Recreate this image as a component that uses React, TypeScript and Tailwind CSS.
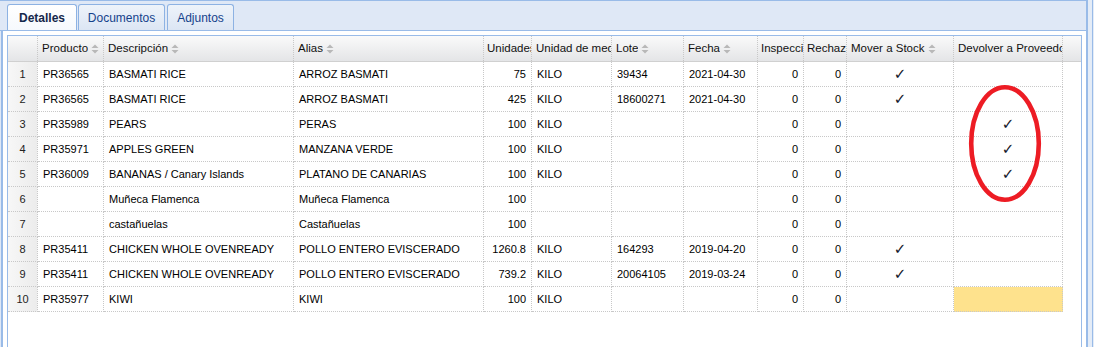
import React from "react";

type Col = {
  key: string;
  label: string;
  w: string;
  align: "left" | "right" | "center";
  sort?: boolean;
};

const cols: Col[] = [
  { key: "prod", label: "Producto", w: "w-[66px]", align: "left", sort: true },
  { key: "desc", label: "Descripción", w: "w-[190px]", align: "left", sort: true },
  { key: "alias", label: "Alias", w: "w-[190px]", align: "left", sort: true },
  { key: "uds", label: "Unidades", w: "w-[48px]", align: "right" },
  { key: "um", label: "Unidad de medida", w: "w-[80px]", align: "left" },
  { key: "lote", label: "Lote", w: "w-[72px]", align: "left", sort: true },
  { key: "fecha", label: "Fecha", w: "w-[74px]", align: "left", sort: true },
  { key: "insp", label: "Inspección", w: "w-[46px]", align: "right" },
  { key: "rech", label: "Rechazo", w: "w-[43px]", align: "right" },
  { key: "mover", label: "Mover a Stock", w: "w-[107px]", align: "center", sort: true },
  { key: "dev", label: "Devolver a Proveedor", w: "w-[109px]", align: "center" },
];

type Row = Record<string, string>;

const rows: Row[] = [
  { prod: "PR36565", desc: "BASMATI RICE", alias: "ARROZ BASMATI", uds: "75", um: "KILO", lote: "39434", fecha: "2021-04-30", insp: "0", rech: "0", mover: "✓", dev: "" },
  { prod: "PR36565", desc: "BASMATI RICE", alias: "ARROZ BASMATI", uds: "425", um: "KILO", lote: "18600271", fecha: "2021-04-30", insp: "0", rech: "0", mover: "✓", dev: "" },
  { prod: "PR35989", desc: "PEARS", alias: "PERAS", uds: "100", um: "KILO", lote: "", fecha: "", insp: "0", rech: "0", mover: "", dev: "✓" },
  { prod: "PR35971", desc: "APPLES GREEN", alias: "MANZANA VERDE", uds: "100", um: "KILO", lote: "", fecha: "", insp: "0", rech: "0", mover: "", dev: "✓" },
  { prod: "PR36009", desc: "BANANAS / Canary Islands", alias: "PLATANO DE CANARIAS", uds: "100", um: "KILO", lote: "", fecha: "", insp: "0", rech: "0", mover: "", dev: "✓" },
  { prod: "", desc: "Muñeca Flamenca", alias: "Muñeca Flamenca", uds: "100", um: "", lote: "", fecha: "", insp: "0", rech: "0", mover: "", dev: "" },
  { prod: "", desc: "castañuelas", alias: "Castañuelas", uds: "100", um: "", lote: "", fecha: "", insp: "0", rech: "0", mover: "", dev: "" },
  { prod: "PR35411", desc: "CHICKEN WHOLE OVENREADY", alias: "POLLO ENTERO EVISCERADO", uds: "1260.8", um: "KILO", lote: "164293", fecha: "2019-04-20", insp: "0", rech: "0", mover: "✓", dev: "" },
  { prod: "PR35411", desc: "CHICKEN WHOLE OVENREADY", alias: "POLLO ENTERO EVISCERADO", uds: "739.2", um: "KILO", lote: "20064105", fecha: "2019-03-24", insp: "0", rech: "0", mover: "✓", dev: "" },
  { prod: "PR35977", desc: "KIWI", alias: "KIWI", uds: "100", um: "KILO", lote: "", fecha: "", insp: "0", rech: "0", mover: "", dev: "" },
];

function SortIcon() {
  return (
    <svg width="8" height="10" viewBox="0 0 8 10" className="ml-[3px] shrink-0">
      <path d="M0.5 4 L4 0.5 L7.5 4 Z" fill="#b8b8b8" />
      <path d="M0.5 6 L4 9.5 L7.5 6 Z" fill="#b8b8b8" />
    </svg>
  );
}

function Check() {
  return (
    <span className="text-[15px] leading-none text-[#15192a]" style={{ fontFamily: '"DejaVu Sans", sans-serif' }}>
      ✓
    </span>
  );
}

export default function App() {
  return (
    <div
      className="relative w-[1094px] h-[347px] overflow-hidden bg-[#dfe8f6] flex text-[11px] text-black"
      style={{ fontFamily: '"Liberation Sans", Arial, sans-serif' }}
    >
      {/* main panel */}
      <div className="w-[1088px] h-full flex flex-col border-t border-r-2 border-[#99bbe8]">
        {/* tab strip */}
        <div className="h-[30px] shrink-0 flex items-end pl-[7px] gap-[1px] border-b border-[#99bbe8] bg-[#dfe8f6]">
          <div className="h-[26px] w-[70px] flex items-center justify-center rounded-t-[3px] border border-b-0 border-[#8db2e3] bg-linear-to-b from-white to-[#f6f9fd] text-[12px] font-bold text-[#15284b]">
            Detalles
          </div>
          <div className="h-[26px] w-[87px] flex items-center justify-center rounded-t-[3px] border border-b-0 border-[#8db2e3] bg-linear-to-b from-[#eef3fa] to-[#dce6f4] text-[12px] text-[#15428b]">
            Documentos
          </div>
          <div className="h-[26px] w-[67px] ml-[1px] flex items-center justify-center rounded-t-[3px] border border-b-0 border-[#8db2e3] bg-linear-to-b from-[#eef3fa] to-[#dce6f4] text-[12px] text-[#15428b]">
            Adjuntos
          </div>
        </div>
        {/* body */}
        <div className="flex-1 ml-px border-l-2 border-[#99bbe8] bg-white pl-[4px] pr-[4px] pt-[4px] flex">
          <div className="flex-1 border border-b-0 border-[#99bbe8] bg-white flex flex-col">
            {/* header */}
            <div className="h-[26px] flex border-b border-[#d0d0d0] bg-linear-to-b from-[#fafafa] to-[#e4e5e7] text-[11.5px]">
              <div className="w-[30px] h-full border-r border-dotted border-[#c8c8c8]" />
              {cols.map((c) => (
                <div
                  key={c.key}
                  className={`${c.w} h-full shrink-0 flex items-center overflow-hidden border-r border-dotted border-[#c8c8c8] ${
                    c.align === "right" ? "pl-[3px]" : "pl-[4px]"
                  }`}
                >
                  <span className="min-w-0 overflow-hidden whitespace-nowrap text-[#111]">{c.label}</span>
                  {c.sort && <SortIcon />}
                </div>
              ))}
            </div>
            {/* rows */}
            {rows.map((r, i) => (
              <div key={i} className="h-[25px] flex">
                <div className="w-[30px] h-full shrink-0 flex items-center justify-center border-r border-b border-dotted border-[#c8c8c8] bg-linear-to-r from-[#f7f7f7] to-[#ececec] text-[#222]">
                  {i + 1}
                </div>
                {cols.map((c) => {
                  const v = r[c.key];
                  const yellow = i === 9 && c.key === "dev";
                  return (
                    <div
                      key={c.key}
                      className={`${c.w} h-full shrink-0 flex items-center overflow-hidden whitespace-nowrap border-r border-b border-dotted border-[#c8c8c8] px-[5px] ${
                        c.align === "right" ? "justify-end" : c.align === "center" ? "justify-center" : "justify-start"
                      } ${yellow ? "bg-[#fee28d]" : ""}`}
                    >
                      {v === "✓" ? <Check /> : v}
                    </div>
                  );
                })}
              </div>
            ))}
          </div>
        </div>
      </div>
      {/* right edge strip */}
      <div className="flex-1 h-full flex justify-end pr-px bg-[#e4ecf7]">
        <div className="w-px h-full bg-[#99bbe8]" />
      </div>

      {/* red annotation ellipse */}
      <svg className="absolute left-[965px] top-[81px]" width="80" height="125" viewBox="0 0 80 125">
        <ellipse cx="40" cy="62.5" rx="33.8" ry="56.2" fill="none" stroke="#ed1c24" strokeWidth="4.6" />
      </svg>
    </div>
  );
}
